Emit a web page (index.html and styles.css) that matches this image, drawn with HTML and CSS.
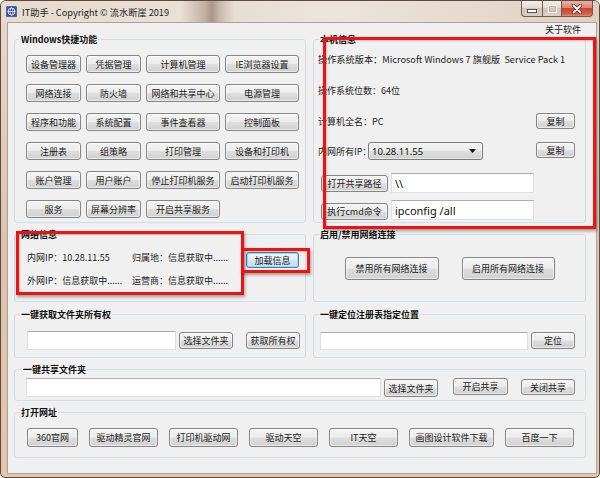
FILE: index.html
```html
<!DOCTYPE html>
<html lang="zh-CN">
<head>
<meta charset="utf-8">
<title>IT助手</title>
<link rel="stylesheet" href="styles.css">
</head>
<body>
<div class="window">
  <div class="titlebar">
    <svg class="appicon" width="11" height="11" viewBox="0 0 11 11">
      <rect x="0" y="0" width="11" height="11" rx="1.5" fill="#243b8a"/>
      <rect x="0.8" y="0.8" width="9.4" height="9.4" rx="1" fill="none" stroke="#8fa3d8" stroke-width="0.6"/>
      <circle cx="5.5" cy="5.5" r="3.5" fill="none" stroke="#fff" stroke-width="0.9"/>
      <ellipse cx="5.5" cy="5.5" rx="1.4" ry="3.5" fill="none" stroke="#fff" stroke-width="0.7"/>
      <line x1="2" y1="5.5" x2="9" y2="5.5" stroke="#fff" stroke-width="0.7"/>
    </svg>
    <span class="title">IT助手 - Copyright © 流水断崖 2019</span>
    <div class="caption">
      <div class="cbtn cmin"><span class="minglyph"></span></div>
      <div class="cbtn cmax"><span class="maxglyph"></span></div>
      <div class="cbtn cclose">
        <svg width="12" height="10" viewBox="0 0 12 10">
          <path d="M2.5 1.5 L9.5 8.5 M9.5 1.5 L2.5 8.5" stroke="#5a231a" stroke-width="3.4" stroke-linecap="round"/>
          <path d="M2.5 1.5 L9.5 8.5 M9.5 1.5 L2.5 8.5" stroke="#ffffff" stroke-width="1.8" stroke-linecap="round"/>
        </svg>
      </div>
    </div>
  </div>

  <div class="client">
    <div class="menubar"><span class="menuitem">关于软件</span></div>

    <div class="row row1">
      <fieldset class="group g-left g-win">
        <legend>Windows快捷功能</legend>
        <div class="btn-grid">
          <button class="btn">设备管理器</button>
          <button class="btn">凭据管理</button>
          <button class="btn">计算机管理</button>
          <button class="btn">IE浏览器设置</button>
          <button class="btn">网络连接</button>
          <button class="btn">防火墙</button>
          <button class="btn">网络和共享中心</button>
          <button class="btn">电源管理</button>
          <button class="btn">程序和功能</button>
          <button class="btn">系统配置</button>
          <button class="btn">事件查看器</button>
          <button class="btn">控制面板</button>
          <button class="btn">注册表</button>
          <button class="btn">组策略</button>
          <button class="btn">打印管理</button>
          <button class="btn">设备和打印机</button>
          <button class="btn">账户管理</button>
          <button class="btn">用户账户</button>
          <button class="btn">停止打印机服务</button>
          <button class="btn">启动打印机服务</button>
          <button class="btn">服务</button>
          <button class="btn">屏幕分辨率</button>
          <button class="btn">开启共享服务</button>
        </div>
      </fieldset>

      <fieldset class="group g-right g-info">
        <legend>本机信息</legend>
        <div class="irow ir1"><span>操作系统版本：Microsoft Windows 7 旗舰版&nbsp; Service Pack 1</span></div>
        <div class="irow ir2"><span>操作系统位数：64位</span></div>
        <div class="irow ir3"><span>计算机全名：PC</span><button class="btn btn-copy">复制</button></div>
        <div class="irow ir4">
          <span class="iplabel">内网所有IP：</span>
          <div class="combo"><span class="combo-text">10.28.11.55</span>
            <svg class="combo-arrow" width="7" height="4" viewBox="0 0 7 4"><path d="M0 0 H7 L3.5 4 Z" fill="#111"/></svg>
          </div>
          <button class="btn btn-copy">复制</button>
        </div>
        <div class="irow ir5">
          <button class="btn btn-path">打开共享路径</button>
          <input class="textbox tb-path" type="text" value="\\">
        </div>
        <div class="irow ir6">
          <button class="btn btn-path">执行cmd命令</button>
          <input class="textbox tb-path" type="text" value="ipconfig /all">
        </div>
      </fieldset>
    </div>

    <div class="row row2">
      <fieldset class="group g-left g-net">
        <legend>网络信息</legend>
        <div class="netgrid">
          <span>内网IP：10.28.11.55</span>
          <span>归属地：信息获取中......</span>
          <span>外网IP：信息获取中......</span>
          <span>运营商：信息获取中......</span>
        </div>
        <button class="btn btn-default btn-load">加载信息</button>
      </fieldset>
      <fieldset class="group g-right g-conn">
        <legend>启用/禁用网络连接</legend>
        <button class="btn btn-conn1">禁用所有网络连接</button>
        <button class="btn btn-conn2">启用所有网络连接</button>
      </fieldset>
    </div>

    <div class="row row3">
      <fieldset class="group g-left g-own">
        <legend>一键获取文件夹所有权</legend>
        <input class="textbox tb-own" type="text" value="">
        <button class="btn btn-own1">选择文件夹</button>
        <button class="btn btn-own2">获取所有权</button>
      </fieldset>
      <fieldset class="group g-right g-reg">
        <legend>一键定位注册表指定位置</legend>
        <input class="textbox tb-reg" type="text" value="">
        <button class="btn btn-reg">定位</button>
      </fieldset>
    </div>

    <div class="row row4">
      <fieldset class="group g-full g-share">
        <legend>一键共享文件夹</legend>
        <input class="textbox tb-share" type="text" value="">
        <button class="btn btn-sh1">选择文件夹</button>
        <button class="btn btn-sh2">开启共享</button>
        <button class="btn btn-sh3">关闭共享</button>
      </fieldset>
    </div>

    <div class="row row5">
      <fieldset class="group g-full g-url">
        <legend>打开网址</legend>
        <button class="btn url w51">360官网</button>
        <button class="btn url w69">驱动精灵官网</button>
        <button class="btn url w69">打印机驱动网</button>
        <button class="btn url w69">驱动天空</button>
        <button class="btn url w69">IT天空</button>
        <button class="btn url w85">画图设计软件下载</button>
        <button class="btn url w69">百度一下</button>
      </fieldset>
    </div>
  </div>

  <div class="mark mark-a"></div>
  <div class="mark mark-b"></div>
  <div class="mark mark-c"></div>
</div>
</body>
</html>
```

FILE: styles.css
```css
html, body {
  margin: 0;
  padding: 0;
}
body {
  width: 600px;
  height: 478px;
  overflow: hidden;
  font-family: "Noto Sans CJK SC", "Noto Sans", sans-serif;
  font-size: 9px;
  color: #1c1c1c;
  background: #ffffff;
}

.window {
  position: relative;
  box-sizing: border-box;
  width: 600px;
  height: 478px;
  border: 1px solid #5e4b3e;
  border-radius: 6px 6px 5px 5px;
  background: linear-gradient(180deg, #ebe1d8 0px, #e6d7ca 22px, #dcc4b0 50%, #e3c6ab 100%);
  display: flex;
  flex-direction: column;
  overflow: hidden;
}

/* ---------- title bar ---------- */
.titlebar {
  height: 21px;
  flex: none;
  display: flex;
  align-items: center;
  padding-left: 5px;
  background: linear-gradient(90deg, #e7dace 0%, #ebe0d6 30%, #c3b2a4 34%, #a8978a 35.3%, #c8b8aa 36.5%, #e8ddd3 39%, #ede4dc 55%, #e6d9cd 80%, #dfcfc1 100%);
}
.appicon {
  flex: none;
  display: block;
}
.title {
  margin-left: 5px;
  font-size: 9.2px;
  line-height: 12px;
  color: #1e1e1e;
  white-space: nowrap;
}
.caption {
  margin-left: auto;
  margin-right: 6px;
  align-self: flex-start;
  display: flex;
  height: 16px;
}
.cbtn {
  box-sizing: border-box;
  height: 16px;
  border: 1px solid #6f5c50;
  border-top: none;
  display: flex;
  align-items: center;
  justify-content: center;
}
.cmin {
  width: 21px;
  border-radius: 0 0 0 4px;
  border-right: none;
  background: linear-gradient(180deg, #f3ece7 0%, #e6dbd3 45%, #d3c3b8 50%, #dccfc6 100%);
  align-items: flex-end;
  padding-bottom: 3px;
}
.cmax {
  width: 19px;
  border-right: none;
  background: linear-gradient(180deg, #f3ece7 0%, #e6dbd3 45%, #d3c3b8 50%, #dccfc6 100%);
}
.cclose {
  width: 32px;
  border-radius: 0 0 4px 0;
  background: linear-gradient(180deg, #eab2a5 0%, #dc8573 45%, #c7452c 50%, #d3624b 85%, #e08a72 100%);
}
.minglyph {
  display: block;
  width: 8px;
  height: 2px;
  background: #ffffff;
  border: 1px solid #5b4c44;
}
.maxglyph {
  display: block;
  width: 5px;
  height: 4px;
  border: 1px solid #b9aca3;
  outline: 1px solid #ffffff;
}

/* ---------- client ---------- */
.client {
  flex: none;
  box-sizing: border-box;
  height: 452px;
  margin: 0 2px 0 6px;
  border: 1px solid #a9a29b;
  background: #f0f0f0;
  padding: 0 10px 0 6px;
  display: flex;
  flex-direction: column;
}
.menubar {
  height: 11px;
  flex: none;
  display: flex;
  justify-content: flex-end;
  padding-right: 5px;
}
.menuitem {
  line-height: 14px;
  font-size: 9px;
  color: #1c1c1c;
}

.row {
  display: flex;
  gap: 7px;
  flex: none;
}
.row1 { height: 189px; }
.row2 { height: 73px; margin-top: 6px; }
.row3 { height: 49px; margin-top: 7px; }
.row4 { height: 37px; margin-top: 6px; }
.row5 { height: 51px; margin-top: 6px; }

/* ---------- group boxes ---------- */
.group {
  --pl: 0px;
  box-sizing: border-box;
  margin: 0;
  min-width: 0;
  height: 100%;
  border: 1px solid #d5dbe0;
  border-radius: 3px;
  padding: 0;
}
.group > legend {
  margin-left: calc(5px - var(--pl));
  padding: 0 1px;
  font-size: 9px;
  font-weight: bold;
  line-height: 11px;
  color: #111111;
}
.g-left { width: 292px; }
.g-right { width: 273px; }
.g-full { width: 572px; }

/* ---------- buttons ---------- */
.btn {
  box-sizing: border-box;
  margin: 0;
  padding: 0;
  border: 1px solid #858585;
  border-radius: 3px;
  background: linear-gradient(180deg, #f4f4f4 0%, #ececec 48%, #dedede 52%, #d0d0d0 100%);
  box-shadow: inset 0 0 0 1px rgba(255, 255, 255, 0.55);
  font-family: inherit;
  font-size: 9px;
  line-height: 1;
  color: #1c1c1c;
  display: flex;
  align-items: center;
  justify-content: center;
  white-space: nowrap;
  flex: none;
}
.btn-default {
  border-color: #3c7fb1;
  background: linear-gradient(180deg, #eef5fb 0%, #e2eef8 48%, #d2e5f3 52%, #c8def0 100%);
  box-shadow: inset 0 0 0 1px #a9d6f3;
}

/* ---------- text boxes ---------- */
.textbox {
  box-sizing: border-box;
  margin: 0;
  padding: 0 3px;
  border: 1px solid #dde1e7;
  border-top-color: #abadb3;
  background: #ffffff;
  font-family: "Noto Sans", "Noto Sans CJK SC", sans-serif;
  font-size: 11px;
  color: #111111;
  outline: none;
  flex: none;
}

/* ---------- Windows shortcut group ---------- */
.g-win {
  --pl: 11px;
  padding: 10px 0 0 11px;
}
.btn-grid {
  display: grid;
  grid-template-columns: 55px 55px 74px 74px;
  grid-auto-rows: 18px;
  column-gap: 5px;
  row-gap: 11px;
}

/* ---------- local info group ---------- */
.g-info {
  --pl: 4px;
  padding: 0 10px 0 4px;
  display: flex;
  flex-direction: column;
}
.irow {
  display: flex;
  align-items: center;
  flex: none;
  white-space: nowrap;
}
.ir1 { margin-top: 7px; height: 14px; font-size: 9.2px; }
.ir2 { margin-top: 17px; height: 14px; }
.ir3 { margin-top: 16px; height: 16px; }
.ir4 { margin-top: 13px; height: 18px; }
.ir5 { margin-top: 13px; height: 20px; }
.ir6 { margin-top: 7px; height: 20px; }
.btn-copy {
  width: 39px;
  height: 16px;
  margin-left: auto;
}
.ir4 .btn-copy {
  align-self: flex-start;
}
.iplabel {
  width: 50px;
  flex: none;
}
.combo {
  box-sizing: border-box;
  width: 115px;
  height: 18px;
  border: 1px solid #7a7a7a;
  border-radius: 3px;
  background: linear-gradient(180deg, #f4f4f4 0%, #ececec 48%, #dedede 52%, #d0d0d0 100%);
  box-shadow: inset 0 0 0 1px rgba(255, 255, 255, 0.5);
  display: flex;
  align-items: center;
  padding: 0 6px 0 3px;
  flex: none;
}
.combo-text {
  font-family: "Noto Sans", "Noto Sans CJK SC", sans-serif;
  font-size: 9.5px;
  color: #111111;
}
.combo-arrow {
  margin-left: auto;
  display: block;
}
.btn-path {
  width: 67px;
  height: 17px;
  margin-left: 3px;
}
.ir6 .btn-path {
  margin-top: 2px;
}
.tb-path {
  width: 143px;
  height: 20px;
  margin-left: 3px;
}

/* ---------- network info group ---------- */
.g-net {
  --pl: 12px;
  padding: 10px 6px 0 12px;
  display: flex;
  align-items: flex-start;
}
.netgrid {
  display: grid;
  grid-template-columns: 105px auto;
  grid-auto-rows: 16px;
  row-gap: 7px;
  line-height: 16px;
  white-space: nowrap;
}
.btn-load {
  width: 53px;
  height: 16px;
  margin-top: 2px;
  margin-left: auto;
}

/* ---------- enable/disable group ---------- */
.g-conn {
  --pl: 0px;
  padding: 17px 0 0 0;
  display: flex;
  justify-content: center;
  align-items: flex-start;
  gap: 23px;
}
.btn-conn1 { width: 94px; height: 23px; }
.btn-conn2 { width: 93px; height: 23px; }

/* ---------- ownership group ---------- */
.g-own {
  --pl: 12px;
  padding: 11px 0 0 12px;
  display: flex;
  align-items: flex-start;
}
.tb-own { width: 149px; height: 19px; }
.btn-own1 { width: 54px; height: 17px; margin: 1px 0 0 3px; }
.btn-own2 { width: 54px; height: 17px; margin: 1px 0 0 13px; }

/* ---------- registry group ---------- */
.g-reg {
  --pl: 6px;
  padding: 12px 0 0 6px;
  display: flex;
  align-items: flex-start;
}
.tb-reg { width: 208px; height: 18px; }
.btn-reg { width: 44px; height: 17px; margin-left: 3px; }

/* ---------- share group ---------- */
.g-share {
  --pl: 11px;
  padding: 3px 0 0 11px;
  display: flex;
  align-items: flex-start;
}
.g-share > legend { margin-left: -4px; }
.tb-share { width: 355px; height: 19px; }
.btn-sh1 { width: 54px; height: 18px; margin: 1px 0 0 3px; }
.btn-sh2 { width: 55px; height: 17px; margin: 0 0 0 15px; }
.btn-sh3 { width: 54px; height: 16px; margin: 1px 0 0 13px; }

/* ---------- url group ---------- */
.g-url {
  --pl: 12px;
  padding: 10px 0 0 12px;
  display: flex;
  align-items: flex-start;
  gap: 11px;
}
.url { height: 19px; }
.w51 { width: 51px; }
.w69 { width: 69px; }
.w85 { width: 85px; }

/* ---------- red annotation rectangles (overlay) ---------- */
.mark {
  position: absolute;
  box-sizing: border-box;
  border: 3px solid #f01212;
  box-shadow: 1px 2px 3px rgba(0, 0, 0, 0.35), inset 1px 1px 2px rgba(0, 0, 0, 0.2);
  pointer-events: none;
}
.mark-a { left: 322px; top: 36px; width: 273px; height: 192px; }
.mark-b { left: 15px; top: 230px; width: 228px; height: 64px; }
.mark-c { left: 240px; top: 247px; width: 69px; height: 25px; }
```
